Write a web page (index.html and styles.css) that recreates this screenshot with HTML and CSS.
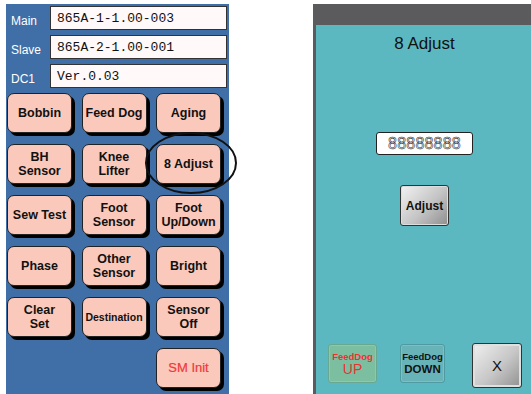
FILE: index.html
```html
<!DOCTYPE html>
<html>
<head>
<meta charset="utf-8">
<link rel="stylesheet" href="styles.css">
</head>
<body>
<div class="page">
  <div class="left">
    <div class="info">
      <div class="lbl">Main</div><div class="val">865A-1-1.00-003</div>
      <div class="lbl">Slave</div><div class="val">865A-2-1.00-001</div>
      <div class="lbl">DC1</div><div class="val">Ver.0.03</div>
    </div>
    <div class="grid">
      <div class="btn">Bobbin</div>
      <div class="btn">Feed Dog</div>
      <div class="btn">Aging</div>
      <div class="btn">BH<br>Sensor</div>
      <div class="btn">Knee<br>Lifter</div>
      <div class="btn circled">8 Adjust
        <svg class="ring" width="94" height="64" viewBox="0 0 94 64"><ellipse cx="47" cy="32" rx="45" ry="30" fill="none" stroke="#111" stroke-width="2"/></svg>
      </div>
      <div class="btn">Sew Test</div>
      <div class="btn">Foot<br>Sensor</div>
      <div class="btn">Foot<br>Up/Down</div>
      <div class="btn">Phase</div>
      <div class="btn">Other<br>Sensor</div>
      <div class="btn">Bright</div>
      <div class="btn">Clear<br>Set</div>
      <div class="btn small">Destination</div>
      <div class="btn">Sensor<br>Off</div>
      <div class="empty"></div>
      <div class="empty"></div>
      <div class="btn red">SM Init</div>
    </div>
  </div>
  <div class="right">
    <div class="bar"></div>
    <div class="body">
      <div class="title">8 Adjust</div>
      <div class="num">88888888</div>
      <div class="adj">Adjust</div>
      <div class="bottom">
        <div class="fd up"><span class="s">FeedDog</span><span class="b">UP</span></div>
        <div class="fd down"><span class="s">FeedDog</span><span class="b">DOWN</span></div>
        <div class="close">X</div>
      </div>
    </div>
  </div>
</div>
</body>
</html>
```
FILE: styles.css
```css
html, body { margin: 0; padding: 0; background: #fff; }
body { width: 531px; height: 394px; overflow: hidden; font-family: "Liberation Sans", Arial, sans-serif; }
.page { display: flex; height: 394px; }

.left {
  margin: 4px 0 0 6px;
  width: 223px;
  height: 390px;
  background: #406ea6;
  box-sizing: border-box;
  padding: 2px 2px 0 1px;
}
.info {
  display: grid;
  grid-template-columns: 43px 1fr;
  grid-auto-rows: 24px;
  row-gap: 5px;
}
.lbl { color: #fff; font-size: 12px; padding-left: 4px; display: flex; align-items: center; padding-top: 5px; }
.val {
  background: #fff9f9;
  border: 1px solid #333;
  font-family: "Liberation Mono", monospace;
  font-size: 13px;
  color: #111;
  display: flex; align-items: center;
  padding-left: 6px;
}
.grid {
  margin-top: 5px;
  display: grid;
  grid-template-columns: 65px 65px 65px;
  grid-auto-rows: 40px;
  column-gap: 9.5px;
  row-gap: 11px;
}
.btn {
  position: relative;
  background: #fac9bb;
  border: 1px solid #222;
  border-radius: 7px;
  box-shadow: 3px 3px 0 #000;
  display: flex; align-items: center; justify-content: center;
  text-align: center;
  font-weight: bold;
  font-size: 12.5px;
  line-height: 14px;
  color: #111;
}
.btn.small { font-size: 10.5px; }
.btn.red { color: #f03838; font-weight: normal; font-size: 13px; -webkit-text-stroke: 0.2px #f03838; }
.ring { position: absolute; left: -13px; top: -14px; }

.right {
  margin: 4px 0 0 auto;
  width: 218px;
  height: 390px;
  display: flex; flex-direction: column;
}
.bar { height: 21px; background: #5b5b5d; }
.body {
  flex: 1;
  background: #5cb8c0;
  border-left: 3px solid #5b5b5d;
  display: flex; flex-direction: column; align-items: center;
}
.title { margin-top: 9px; font-size: 17px; color: #111; line-height: 20px; margin-left: 2px; }
.num {
  margin-top: 78px;
  width: 95px; height: 21px;
  background: #fff;
  border: 1px solid #222;
  border-radius: 3px;
  display: flex; align-items: center; justify-content: center;
  font-size: 16px; letter-spacing: 0.2px;
  color: #fff;
  -webkit-text-stroke: 0.6px #333;
  margin-left: 2px;
}
.adj {
  margin-top: 30px;
  width: 47px; height: 39px;
  border: 1px solid #333;
  border-radius: 3px;
  box-shadow: inset 0 0 0 1px #ddd;
  background: linear-gradient(135deg, #f2f2f2 0%, #c4c4c4 55%, #8e8e8e 100%);
  display: flex; align-items: center; justify-content: center;
  font-weight: bold; font-size: 12px; color: #111;
  margin-left: 2px;
}
.bottom {
  margin-top: auto;
  margin-bottom: 6px;
  align-self: stretch;
  display: flex; align-items: flex-start;
  padding-left: 12px;
}
.fd {
  box-sizing: border-box;
  height: 39px;
  border-radius: 3px;
  display: flex; flex-direction: column; align-items: center; justify-content: center;
  margin-top: 1px;
}
.fd .s { font-size: 9.5px; font-weight: bold; line-height: 11px; }
.fd .b { line-height: 15px; }
.up { width: 49px; background: #7bbfa0; border: 1px solid #68a890; box-shadow: inset 0 0 0 1px #8cc8ac; color: #f03030; }
.up .b { font-size: 14px; }
.down { width: 45px; margin-left: 23px; background: #68b3b8; border: 1px solid #4f9aa0; box-shadow: inset 0 0 0 1px #7cc0c4; color: #111; }
.down .b { font-size: 11.5px; font-weight: bold; }
.close {
  margin-left: 27px;
  box-sizing: border-box;
  width: 50px; height: 45px;
  border: 1px solid #333;
  border-radius: 3px;
  box-shadow: inset 0 0 0 2px #e0e0e0;
  background: linear-gradient(135deg, #f0f0f0 0%, #c6c6c6 55%, #909090 100%);
  display: flex; align-items: center; justify-content: center;
  font-size: 15px; color: #111;
}
```
